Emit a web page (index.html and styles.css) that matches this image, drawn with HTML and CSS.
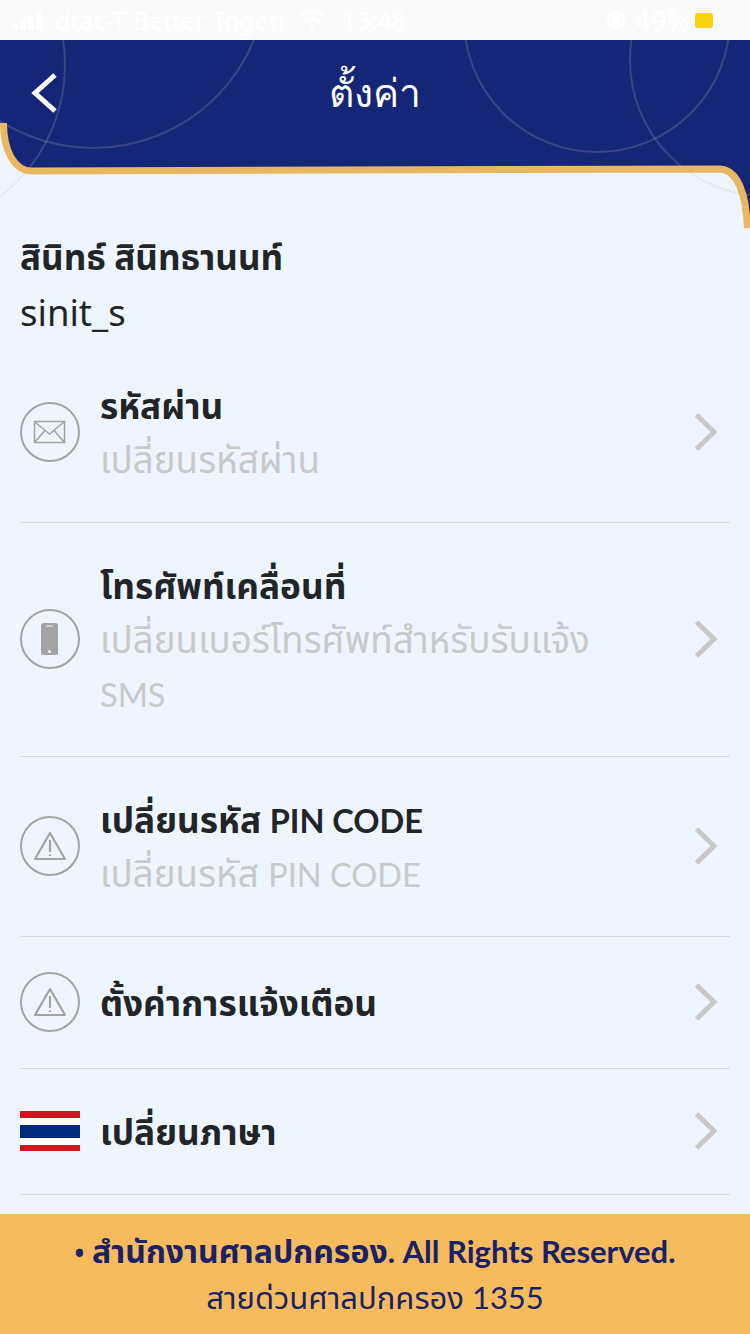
FILE: index.html
```html
<!DOCTYPE html>
<html lang="th">
<head>
<meta charset="utf-8">
<title>ตั้งค่า</title>
<link rel="stylesheet" href="styles.css">
</head>
<body>
<div class="page">
  <div class="statusbar">
    <div class="status-left">
      <svg class="signal" width="36" height="20" viewBox="0 0 36 20"><rect x="1" y="14" width="6" height="6"/><rect x="9" y="11" width="6" height="9"/><rect x="17" y="6" width="6" height="14"/><rect x="25" y="1" width="6" height="19"/></svg>
      <span class="carrier">dtac-T Better Togeti</span>
      <svg class="wifi" width="30" height="22" viewBox="0 0 30 22"><path d="M2 8C9 1 21 1 28 8M7 13C11 9 19 9 23 13"/><circle cx="15" cy="18" r="2.500"/></svg>
      <span class="time">13:48</span>
    </div>
    <div class="status-right">
      <svg class="lock" width="22" height="22" viewBox="0 0 22 22"><circle cx="11" cy="11" r="8"/><circle cx="11" cy="11" r="2.500"/></svg>
      <span class="percent">49%</span>
      <span class="battery"></span>
    </div>
  </div>
  <header class="header">
    <svg class="header-bg" width="750" height="190" viewBox="0 40 750 190">
      <path class="hd-fill" d="M0 40H750V228H747.500C746 195 738 170 720 169L32 171C14 171 3.500 150 3.500 123H0Z"/>
      <circle class="hd-ring" cx="93" cy="-26" r="174"/>
      <circle class="hd-ring" cx="597" cy="19" r="133"/>
      <circle class="hd-ring" cx="766" cy="60" r="136"/>
      <circle class="hd-ring" cx="-101" cy="65" r="166"/>
      <path class="hd-gold" d="M3.500 123C3.500 150 14 171 32 171L720 169C738 170 746 195 747.500 228"/>
    </svg>
    <button class="back" aria-label="back">
      <svg width="26" height="40" viewBox="0 0 26 40"><path d="M24 2L4 20L24 38" fill="none" stroke="#fff" stroke-width="5"/></svg>
    </button>
    <h1 class="title">ตั้งค่า</h1>
  </header>
  <main class="content">
    <section class="user">
      <div class="user-name">สินิทธ์ สินิทธานนท์</div>
      <div class="user-id">sinit_s</div>
    </section>
    <ul class="menu">
      <li class="row">
        <span class="badge"><svg width="34" height="24" viewBox="0 0 34 24" fill="none" stroke="#a3a3a3" stroke-width="1.500"><rect x="1.500" y="1.500" width="30" height="21"/><path d="M1.500 1.500L16.500 14L31.500 1.500M1.500 22.500L12 10.500M31.500 22.500L21 10.500"/></svg></span>
        <div class="row-text"><div class="row-title">รหัสผ่าน</div><div class="row-sub">เปลี่ยนรหัสผ่าน</div></div>
        <svg class="chev" width="26" height="40" viewBox="0 0 26 40"><path d="M2.500 3L20 20L2.500 37"/></svg>
      </li>
      <li class="row">
        <span class="badge"><svg width="18" height="32" viewBox="0 0 18 32"><rect width="17" height="32" rx="2.500" fill="#a3a3a3"/><rect x="5" y="2.500" width="7" height="1" fill="#eef5fe"/><circle cx="8.500" cy="28.500" r="1.500" fill="#eef5fe"/></svg></span>
        <div class="row-text"><div class="row-title">โทรศัพท์เคลื่อนที่</div><div class="row-sub">เปลี่ยนเบอร์โทรศัพท์สำหรับรับแจ้ง <span class="latin-sub">SMS</span></div></div>
        <svg class="chev" width="26" height="40" viewBox="0 0 26 40"><path d="M2.500 3L20 20L2.500 37"/></svg>
      </li>
      <li class="row">
        <span class="badge"><svg width="34" height="30" viewBox="0 0 34 30" fill="none" stroke="#a3a3a3" stroke-width="2.200" stroke-linejoin="round"><path d="M17 2L32 28H2Z"/><path d="M17 9V21M17 23.500V25"/></svg></span>
        <div class="row-text"><div class="row-title">เปลี่ยนรหัส <span class="latin-title">PIN CODE</span></div><div class="row-sub">เปลี่ยนรหัส <span class="latin-sub">PIN CODE</span></div></div>
        <svg class="chev" width="26" height="40" viewBox="0 0 26 40"><path d="M2.500 3L20 20L2.500 37"/></svg>
      </li>
      <li class="row">
        <span class="badge"><svg width="34" height="30" viewBox="0 0 34 30" fill="none" stroke="#a3a3a3" stroke-width="2.200" stroke-linejoin="round"><path d="M17 2L32 28H2Z"/><path d="M17 9V21M17 23.500V25"/></svg></span>
        <div class="row-text"><div class="row-title">ตั้งค่าการแจ้งเตือน</div></div>
        <svg class="chev" width="26" height="40" viewBox="0 0 26 40"><path d="M2.500 3L20 20L2.500 37"/></svg>
      </li>
      <li class="row">
        <span class="flag"><i class="stripe-red"></i><i class="stripe-white"></i><i class="stripe-blue"></i><i class="stripe-white"></i><i class="stripe-red"></i></span>
        <div class="row-text"><div class="row-title">เปลี่ยนภาษา</div></div>
        <svg class="chev" width="26" height="40" viewBox="0 0 26 40"><path d="M2.500 3L20 20L2.500 37"/></svg>
      </li>
    </ul>
  </main>
  <footer class="footer">
    <div class="footer-main"><span class="dot">•</span> สำนักงานศาลปกครอง<span class="latin-foot">. All Rights Reserved.</span></div>
    <div class="footer-sub">สายด่วนศาลปกครอง 1355</div>
  </footer>
</div>
</body>
</html>
```
FILE: styles.css
```css
* { box-sizing: border-box; }
html, body { margin: 0; padding: 0; }
body { font-family: "Lato", "Noto Sans", "Noto Sans Thai", sans-serif; background: #eef5fe; }
.page { width: 750px; height: 1334px; display: flex; flex-direction: column; overflow: hidden; background: #eef5fe; }
.statusbar { height: 40px; background: #fafafa; color: #fff; display: flex; justify-content: space-between; align-items: center; padding: 0 37px 0 11px; font-family: "Noto Sans", sans-serif; font-size: 25px; }
.status-left, .status-right { display: flex; align-items: center; white-space: nowrap; }
.signal { fill: #fff; }
.carrier { margin-left: 8px; width: 228px; overflow: hidden; }
.wifi { margin-left: 14px; fill: #fff; }
.wifi path { fill: none; stroke: #fff; stroke-width: 3; }
.time { margin-left: 15px; }
.lock { fill: none; stroke: #fff; stroke-width: 2.500; }
.percent { margin-left: 8px; font-size: 28px; }
.battery { margin-left: 5px; width: 18px; height: 15px; border-radius: 3px; background: #fbd40a; }
.header { position: relative; height: 190px; flex: none; }
.header-bg { position: absolute; left: 0; top: 0; }
.hd-fill { fill: #162676; }
.hd-gold { fill: none; stroke: #e8b762; stroke-width: 7; }
.hd-ring { fill: none; stroke: rgba(200, 190, 185, 0.2); stroke-width: 2; }
.back { position: absolute; left: 31px; top: 33px; background: none; border: 0; padding: 0; display: block; }
.back svg { display: block; }
.title { position: relative; margin: 0; padding-top: 25px; text-align: center; color: #fff; font-family: "Noto Sans", sans-serif; font-size: 39px; line-height: 54px; font-weight: 500; }
.content { flex: 1; padding: 0 20px; }
.user { padding-bottom: 4px; }
.user-name { font-size: 35px; line-height: 53px; margin-bottom: 2px; font-weight: 700; color: #212529; }
.user-id { font-family: "Noto Sans", sans-serif; font-size: 36.500px; line-height: 54px; color: #212529; }
.menu { list-style: none; margin: 0; padding: 0; }
.row { display: flex; align-items: center; gap: 20px; padding: 35px 10px 36px 0; border-bottom: 1px solid #d5dbe3; }
.badge { width: 60px; height: 60px; flex: none; border-radius: 50%; border: 2px solid #a3a3a3; display: flex; align-items: center; justify-content: center; }
.flag { width: 60px; height: 40px; flex: none; display: flex; flex-direction: column; }
.flag i { display: block; }
.stripe-red { height: 7px; background: #d2151f; }
.stripe-white { height: 7px; background: #fff; }
.stripe-blue { height: 13px; background: #012a7f; }
.stripe-red:last-child { height: 6px; }
.row-text { flex: 1; min-width: 0; padding-right: 60px; }
.row-title { font-size: 35.200px; line-height: 54px; font-weight: 700; color: #212529; }
.row-sub { font-size: 36.800px; line-height: 54px; color: #c8c9cb; }
.latin-title { font-size: 32.500px; line-height: 0; }
.latin-sub { font-size: 32.500px; line-height: 0; }
.chev { flex: none; fill: none; stroke: #c9c8c8; stroke-width: 5; }
.footer { height: 120px; flex: none; background: #f6bb5c; text-align: center; color: #192168; padding-top: 10px; }
.footer-main { font-size: 32px; line-height: 54px; font-weight: 700; }
.dot { font-family: "Noto Sans", sans-serif; font-size: 26px; line-height: 0; }
.latin-foot { font-size: 31px; line-height: 0; }
.footer-sub { font-size: 31px; line-height: 38px; }
```
